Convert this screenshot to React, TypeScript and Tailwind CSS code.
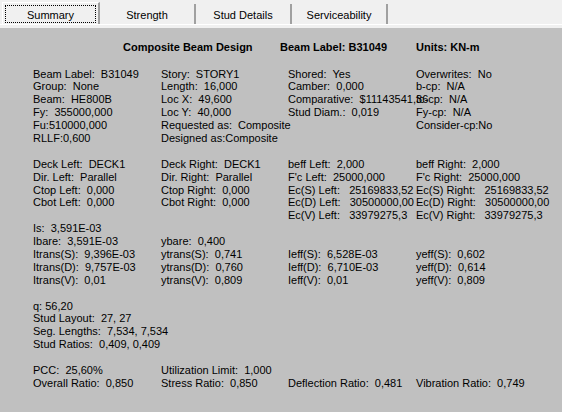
const rows: string[][] = [
  ["Beam Label:  B31049", "Story:  STORY1", "Shored:  Yes", "Overwrites:  No"],
  ["Group:  None", "Length:  16,000", "Camber:  0,000", "b-cp:  N/A"],
  ["Beam:  HE800B", "Loc X:  49,600", "Comparative:  $11143541,36", "fc-cp:  N/A"],
  ["Fy:  355000,000", "Loc Y:  40,000", "Stud Diam.:  0,019", "Fy-cp:  N/A"],
  ["Fu:510000,000", "Requested as:  Composite", "", "Consider-cp:No"],
  ["RLLF:0,600", "Designed as:Composite", "", ""],
  ["", "", "", ""],
  ["Deck Left:  DECK1", "Deck Right:  DECK1", "beff Left:  2,000", "beff Right:  2,000"],
  ["Dir. Left:  Parallel", "Dir. Right:  Parallel", "F'c Left:  25000,000", "F'c Right:  25000,000"],
  ["Ctop Left:  0,000", "Ctop Right:  0,000", "Ec(S) Left:   25169833,52", "Ec(S) Right:   25169833,52"],
  ["Cbot Left:  0,000", "Cbot Right:  0,000", "Ec(D) Left:   30500000,00", "Ec(D) Right:   30500000,00"],
  ["", "", "Ec(V) Left:   33979275,3", "Ec(V) Right:   33979275,3"],
  ["Is:  3,591E-03", "", "", ""],
  ["Ibare:  3,591E-03", "ybare:  0,400", "", ""],
  ["Itrans(S):  9,396E-03", "ytrans(S):  0,741", "Ieff(S):  6,528E-03", "yeff(S):  0,602"],
  ["Itrans(D):  9,757E-03", "ytrans(D):  0,760", "Ieff(D):  6,710E-03", "yeff(D):  0,614"],
  ["Itrans(V):  0,01", "ytrans(V):  0,809", "Ieff(V):  0,01", "yeff(V):  0,809"],
  ["", "", "", ""],
  ["q: 56,20", "", "", ""],
  ["Stud Layout:  27, 27", "", "", ""],
  ["Seg. Lengths:  7,534, 7,534", "", "", ""],
  ["Stud Ratios:  0,409, 0,409", "", "", ""],
  ["", "", "", ""],
  ["PCC:  25,60%", "Utilization Limit:  1,000", "", ""],
  ["Overall Ratio:  0,850", "Stress Ratio:  0,850", "Deflection Ratio:  0,481", "Vibration Ratio:  0,749"],
];

const tabs = ["Summary", "Strength", "Stud Details", "Serviceability"];

export default function App() {
  return (
    <div className="w-[562px] h-[412px] overflow-hidden flex flex-col bg-[#c0c0c0] text-black text-[11px] font-['Liberation_Sans',Arial,sans-serif]">
      {/* Tab strip */}
      <div className="h-[24px] shrink-0 bg-[#f0f0f0] flex items-end pl-[2px]">
        {tabs.map((t, i) =>
          i === 0 ? (
            <div
              key={t}
              className="w-[98px] h-[22px] bg-[#f0f0f0] border-t border-l border-white border-r-2 border-r-[#a0a0a0] px-[2px] pt-[2px] pb-[1px]"
            >
              <div className="h-full border border-dotted border-black flex items-center justify-center leading-none pt-[2px]">
                {t}
              </div>
            </div>
          ) : (
            <div
              key={t}
              className="w-[96px] h-[20px] bg-[#f0f0f0] border-r-2 border-r-[#a0a0a0] flex items-center justify-center leading-none pt-[2px]"
            >
              {t}
            </div>
          )
        )}
      </div>
      <div className="h-px shrink-0 bg-white" />
      <div className="h-[3px] shrink-0 bg-[#f0f0f0]" />

      {/* Panel */}
      <div className="flex-1 pt-[12.5px]">
        <div className="flex font-bold leading-[13px] whitespace-pre">
          <div className="w-[123px]" />
          <div className="w-[157px]">Composite Beam Design</div>
          <div className="w-[136px]">Beam Label: B31049</div>
          <div>Units: KN-m</div>
        </div>
        <div className="mt-[14px] pl-[33px]">
          {rows.map((r, i) => (
            <div key={i} className="grid grid-cols-[128px_127px_128px_128px] h-[12.9px] leading-[12.9px] whitespace-pre">
              {r.map((c, j) => (
                <div key={j} className="overflow-visible">
                  {c}
                </div>
              ))}
            </div>
          ))}
        </div>
      </div>
    </div>
  );
}
